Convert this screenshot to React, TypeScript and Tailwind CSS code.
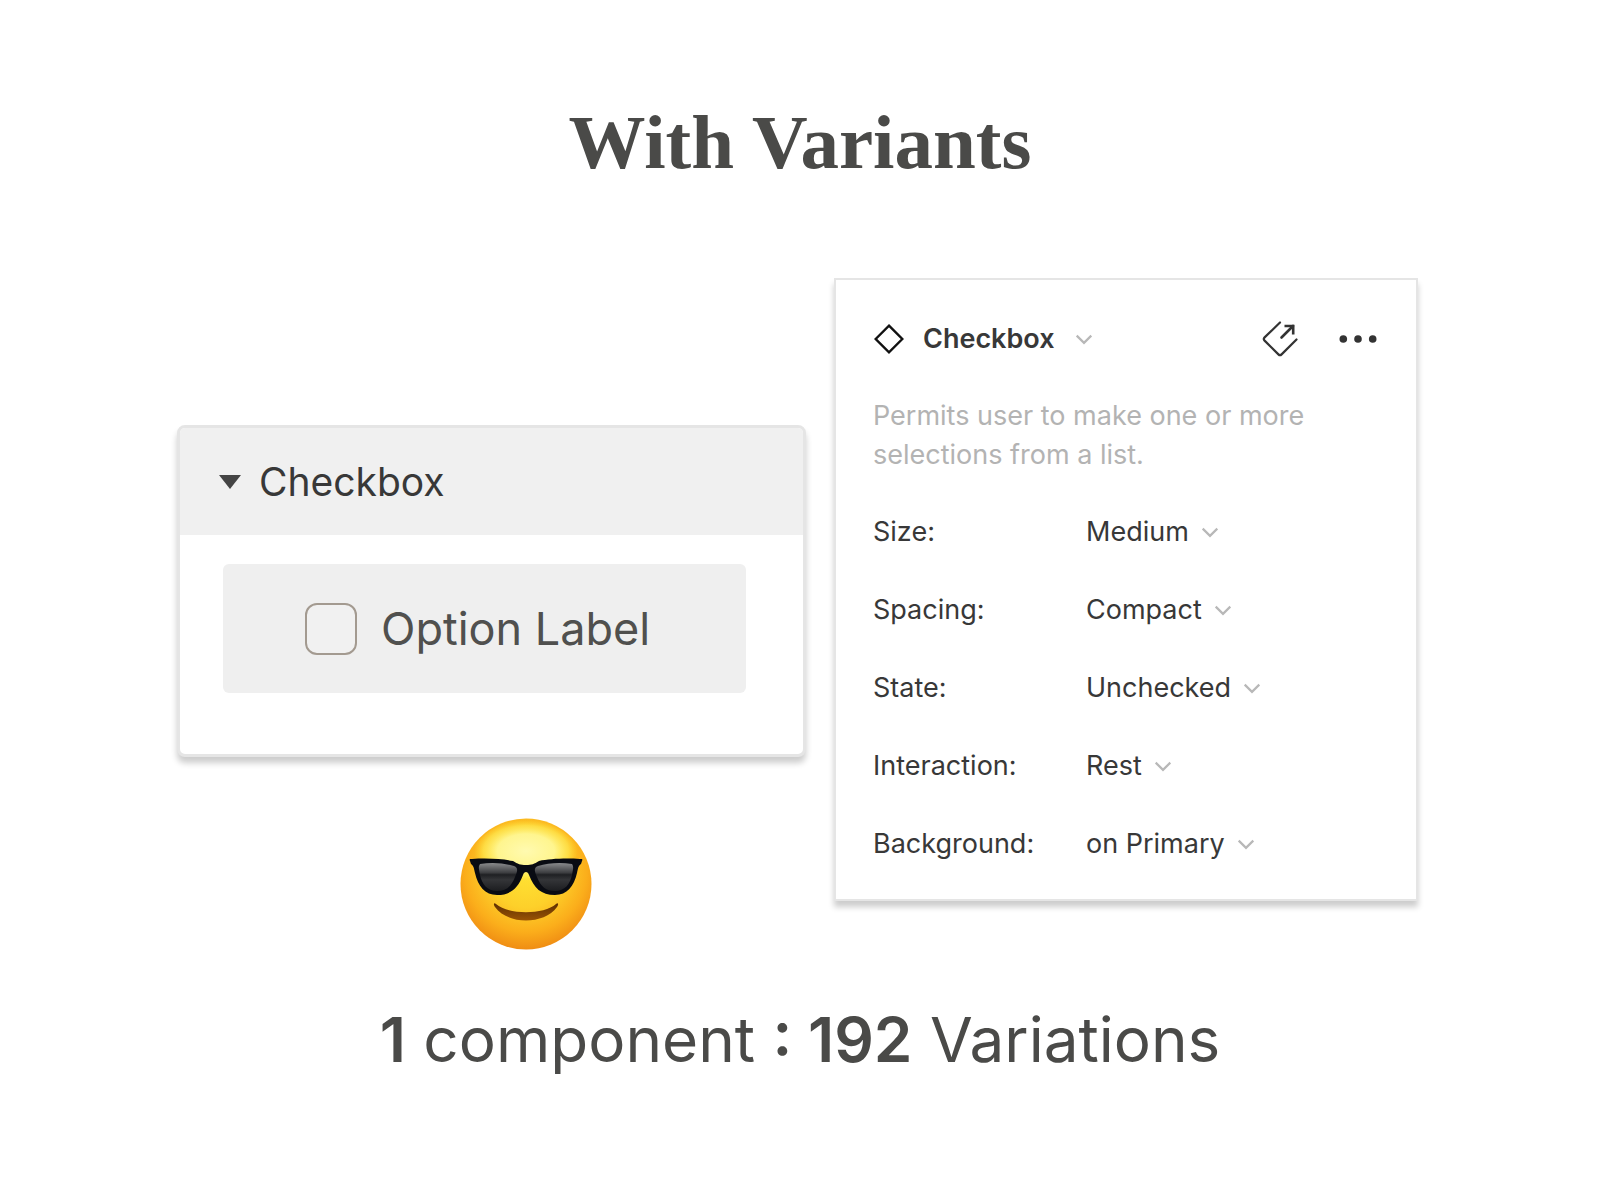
import React, { useState } from 'react';

interface VariantProperty {
  name: string;
  options: string[];
}

const properties: VariantProperty[] = [
  { name: 'Size', options: ['Medium', 'Small', 'Large'] },
  { name: 'Spacing', options: ['Compact', 'Default'] },
  { name: 'State', options: ['Unchecked', 'Checked', 'Indeterminate'] },
  { name: 'Interaction', options: ['Rest', 'Hover', 'Focus', 'Disabled'] },
  { name: 'Background', options: ['on Primary', 'on Secondary'] },
];

function Chevron() {
  return (
    <svg viewBox="0 0 18 12" className="h-3 w-[18px] shrink-0" fill="none" stroke="#b8b8b8" strokeWidth="2.2" aria-hidden="true">
      <path d="M1.7 2.6 L9 9.9 L16.3 2.6" />
    </svg>
  );
}

function SunglassesFace() {
  return (
    <svg viewBox="0 0 132 132" className="size-[132px]" role="img" aria-label="Smiling face with sunglasses">
      <defs>
        <radialGradient id="face" cx="0.5" cy="0.4" r="0.62">
          <stop offset="0" stopColor="#ffe434" />
          <stop offset="0.45" stopColor="#fdd02a" />
          <stop offset="0.75" stopColor="#fbae1b" />
          <stop offset="1" stopColor="#ee8812" />
        </radialGradient>
        <radialGradient id="shine" cx="0.5" cy="0.5" r="0.5">
          <stop offset="0" stopColor="#fffab0" />
          <stop offset="0.55" stopColor="#fff794" stopOpacity="0.95" />
          <stop offset="0.82" stopColor="#ffee58" stopOpacity="0.6" />
          <stop offset="1" stopColor="#ffdc30" stopOpacity="0" />
        </radialGradient>
        <clipPath id="outline">
          <circle cx="66" cy="66" r="64" />
        </clipPath>
        <linearGradient id="lens" x1="0" y1="0" x2="0" y2="1">
          <stop offset="0" stopColor="#8a8b8d" />
          <stop offset="0.35" stopColor="#3c3d40" />
          <stop offset="0.42" stopColor="#1f2023" />
          <stop offset="0.6" stopColor="#343538" />
          <stop offset="1" stopColor="#1c1d20" />
        </linearGradient>
        <linearGradient id="smile" x1="0" y1="0" x2="0" y2="1">
          <stop offset="0" stopColor="#5e2f02" />
          <stop offset="1" stopColor="#9a5304" />
        </linearGradient>
      </defs>
      <circle cx="66" cy="66" r="65.5" fill="url(#face)" />
      <ellipse cx="66" cy="33" rx="52" ry="31" fill="url(#shine)" clipPath="url(#outline)" />
      <path d="M36 86 C48 97 84 97 96 86 C98 84 99 86 97 89 C84 107 48 107 35 89 C33 86 34 84 36 86 Z" fill="url(#smile)" />
      <path
        d="M10 43 C9 41 10 41 12 41 C28 40 43 41 53 43 C58 46 60 47 66 47 C72 47 74 46 79 43 C89 41 104 40 120 41 C122 41 123 41 122 43 L121 46 C118 48 118 51 117 55 C114 68 107 77 95 77 C81 77 74 70 69 57 C68 53 64 53 63 57 C58 70 51 77 37 77 C25 77 18 68 15 55 C14 51 14 48 11 46 Z"
        fill="#090b12"
      />
      <path d="M20 46 C32 44 44 45 54 48 C59 50 57 54 55 59 C51 69 46 73 37 73 C27 73 22 66 20 57 C19 51 18 49 20 46 Z" fill="url(#lens)" />
      <path d="M112 46 C100 44 88 45 78 48 C73 50 75 54 77 59 C81 69 86 73 95 73 C105 73 110 66 112 57 C113 51 114 49 112 46 Z" fill="url(#lens)" />
    </svg>
  );
}

function ComponentPanel() {
  const [open, setOpen] = useState(true);
  const [checked, setChecked] = useState(false);

  return (
    <section className="rounded-lg border-[3px] border-[#e5e5e5] bg-white shadow-[0_6px_6px_rgba(0,0,0,0.2)]">
      <button
        type="button"
        onClick={() => setOpen(!open)}
        aria-expanded={open}
        className="flex w-full items-center gap-[18px] rounded-t-[5px] bg-[#f0f0f0] px-[39px] pt-[29px] pb-7 text-left text-[39px] leading-[50px] text-[#383838]"
      >
        <svg viewBox="0 0 22 14" className="h-[14px] w-[22px]" fill="#444444" aria-hidden="true">
          <path d="M0 0 H22 L11 14 Z" />
        </svg>
        Checkbox
      </button>
      {open && (
        <div className="pt-[29px] pr-[57px] pb-[61px] pl-[43px]">
          <label className="flex items-center gap-6 rounded-md bg-[#efefef] py-[38px] pl-[82px] text-[45px] leading-[53px] text-[#50504e]">
            <input
              type="checkbox"
              checked={checked}
              onChange={(e) => setChecked(e.target.checked)}
              className="size-[52px] shrink-0 appearance-none rounded-xl border-2 border-[#a39a90] bg-[#f1f1f1] checked:bg-[#a39a90]"
            />
            Option Label
          </label>
        </div>
      )}
    </section>
  );
}

function PropertiesPanel() {
  return (
    <section className="border-2 border-[#e5e5e5] bg-white pt-[39px] pr-9 pb-9 pl-[37px] text-[27px] leading-[39px] text-[#383838] shadow-[0_6px_6px_rgba(0,0,0,0.2)]">
      <div className="flex items-center">
        <svg viewBox="0 0 32 32" className="size-8" fill="none" stroke="#111111" strokeWidth="2.4" aria-hidden="true">
          <path d="M16 2.7 L29.3 16 L16 29.3 L2.7 16 Z" />
        </svg>
        <button type="button" className="ml-[18px] flex items-center gap-5 font-semibold">
          Checkbox
          <Chevron />
        </button>
        <button type="button" aria-label="Go to main component" className="ml-auto">
          <svg viewBox="0 0 36 36" className="size-9" fill="none" stroke="#333333" strokeWidth="2.2" strokeLinecap="round" aria-hidden="true">
            <path d="M18 1.5 L2.6 16.4 Q1 18 2.6 19.6 L16.4 33.4 Q18 35 19.6 33.4 L34.5 18.5" />
            <path d="M19.5 16.5 L31 5" strokeWidth="2.6" />
            <path d="M22.5 5 H31.2 V13.5" strokeWidth="2.6" strokeLinecap="butt" strokeLinejoin="miter" />
          </svg>
        </button>
        <button type="button" aria-label="More options" className="mr-[3px] ml-[41px]">
          <svg viewBox="0 0 38 8" className="h-2 w-[38px]" fill="#333333" aria-hidden="true">
            <circle cx="4.3" cy="4" r="3.8" />
            <circle cx="19" cy="4" r="3.8" />
            <circle cx="33.7" cy="4" r="3.8" />
          </svg>
        </button>
      </div>

      <p className="mt-[38px] text-[#b3b3b3]">
        Permits user to make one or more
        <br />
        selections from a list.
      </p>

      <div className="mt-[38px] flex flex-col gap-[39px]">
        {properties.map(({ name, options }) => (
          <div key={name} className="flex items-center">
            <label htmlFor={name} className="w-[213px]">
              {name}:
            </label>
            <select id={name} className="field-sizing-content mr-3 appearance-none bg-transparent">
              {options.map((option) => (
                <option key={option}>{option}</option>
              ))}
            </select>
            <Chevron />
          </div>
        ))}
      </div>
    </section>
  );
}

export default function App() {
  return (
    <main className="min-h-screen bg-white pt-[94px] font-['Inter',sans-serif]">
      <h1 className="text-center font-['Liberation_Serif',serif] text-[77px] leading-[96px] font-bold text-[#4a4a48]">
        With Variants
      </h1>

      <div className="mt-[88px] grid grid-cols-[629fr_584fr] items-start gap-7 pr-[182px] pl-[177px]">
        <div className="mt-[147px]">
          <ComponentPanel />
          <div className="mt-[61px] flex justify-center pl-[68px]">
            <SunglassesFace />
          </div>
        </div>
        <PropertiesPanel />
      </div>

      <p className="mt-[50px] text-center text-[62px] leading-[80px] text-[#4a4a48]">
        <b className="font-semibold">1</b> component <b className="font-semibold">: 192</b> Variations
      </p>
    </main>
  );
}
